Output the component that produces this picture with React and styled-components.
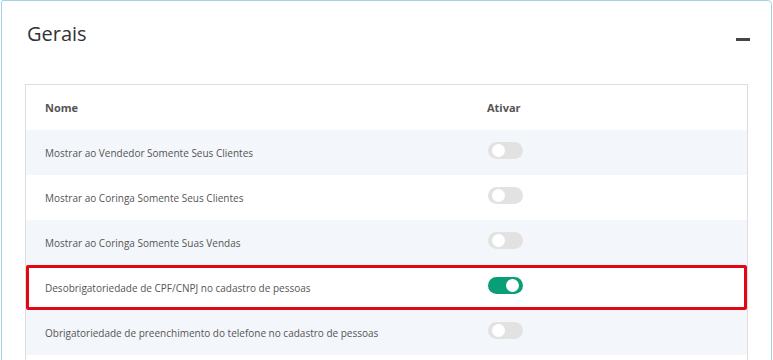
import React from "react";
import styled, { createGlobalStyle } from "styled-components";

const settings = [
    { name: "Mostrar ao Vendedor Somente Seus Clientes", on: false },
    { name: "Mostrar ao Coringa Somente Seus Clientes", on: false },
    { name: "Mostrar ao Coringa Somente Suas Vendas", on: false },
    { name: "Desobrigatoriedade de CPF/CNPJ no cadastro de pessoas", on: true, marked: true },
    { name: "Obrigatoriedade de preenchimento do telefone no cadastro de pessoas", on: false },
];

const App = () => {
    return (
        <>
            <GlobalStyle />
            <Card>
                <CardHeader>
                    <Title>Gerais</Title>
                    <CollapseButton aria-label="Recolher" />
                </CardHeader>
                <Table>
                    <HeadRow>
                        <HeadCell>Nome</HeadCell>
                        <HeadCell>Ativar</HeadCell>
                    </HeadRow>
                    {settings.map((s, i) => (
                        <Row key={s.name} $striped={i % 2 === 0} $marked={s.marked}>
                            <Cell>{s.name}</Cell>
                            <Cell>
                                <Toggle $on={s.on}>
                                    <Knob $on={s.on} />
                                </Toggle>
                            </Cell>
                        </Row>
                    ))}
                </Table>
            </Card>
        </>
    );
};

export default App;

const GlobalStyle = createGlobalStyle`
    *, *::before, *::after {
        box-sizing: border-box;
    }
    body {
        margin: 0;
        background: #fff;
        font-family: "Open Sans", "Liberation Sans", sans-serif;
        overflow: hidden;
    }
`;

const Card = styled.div`
    margin-left: 1px;
    width: 771px;
    border: 1px solid #a4d3df;
    border-radius: 2px 4px 0 0;
    padding: 16px 23px 0 23px;
    background: #fff;
`;

const CardHeader = styled.div`
    display: flex;
    align-items: center;
    justify-content: space-between;
    height: 36px;
    margin-bottom: 31px;
`;

const Title = styled.h2`
    margin: 0;
    font-size: 20px;
    font-weight: 400;
    color: #333;
    padding-left: 2px;
    padding-bottom: 4px;
`;

const CollapseButton = styled.span`
    display: block;
    width: 14px;
    height: 3px;
    background: #454545;
    margin-right: -2px;
    margin-top: 8px;
`;

const Table = styled.div`
    border: 1px solid #dedede;
    border-bottom: none;
    padding-bottom: 40px;
`;

const HeadRow = styled.div`
    display: grid;
    grid-template-columns: 442px 1fr;
    height: 45px;
    align-items: center;
`;

const HeadCell = styled.div`
    padding-left: 19px;
    font-size: 11px;
    font-weight: 700;
    color: #555;
`;

const Row = styled.div`
    display: grid;
    grid-template-columns: 442px 1fr;
    height: 45px;
    align-items: center;
    background: ${(p) => (p.$striped ? "#f3f6fa" : "#fff")};
    box-shadow: ${(p) => (p.$marked ? "inset 0 0 0 3px #e30613" : "none")};
    border-radius: ${(p) => (p.$marked ? "2px" : "0")};
`;

const Cell = styled.div`
    padding-left: 19px;
    font-size: 10px;
    color: #555;
    display: flex;
    align-items: center;
`;

const Toggle = styled.span`
    position: relative;
    display: inline-block;
    width: 35px;
    height: 17px;
    border-radius: 9px;
    background: ${(p) => (p.$on ? "#0a9e76" : "#e2e2e2")};
    margin-left: 1px;
    margin-bottom: 4px;
`;

const Knob = styled.span`
    position: absolute;
    top: 2px;
    left: ${(p) => (p.$on ? "18px" : "4px")};
    width: 13px;
    height: 13px;
    border-radius: 50%;
    background: #fff;
`;
